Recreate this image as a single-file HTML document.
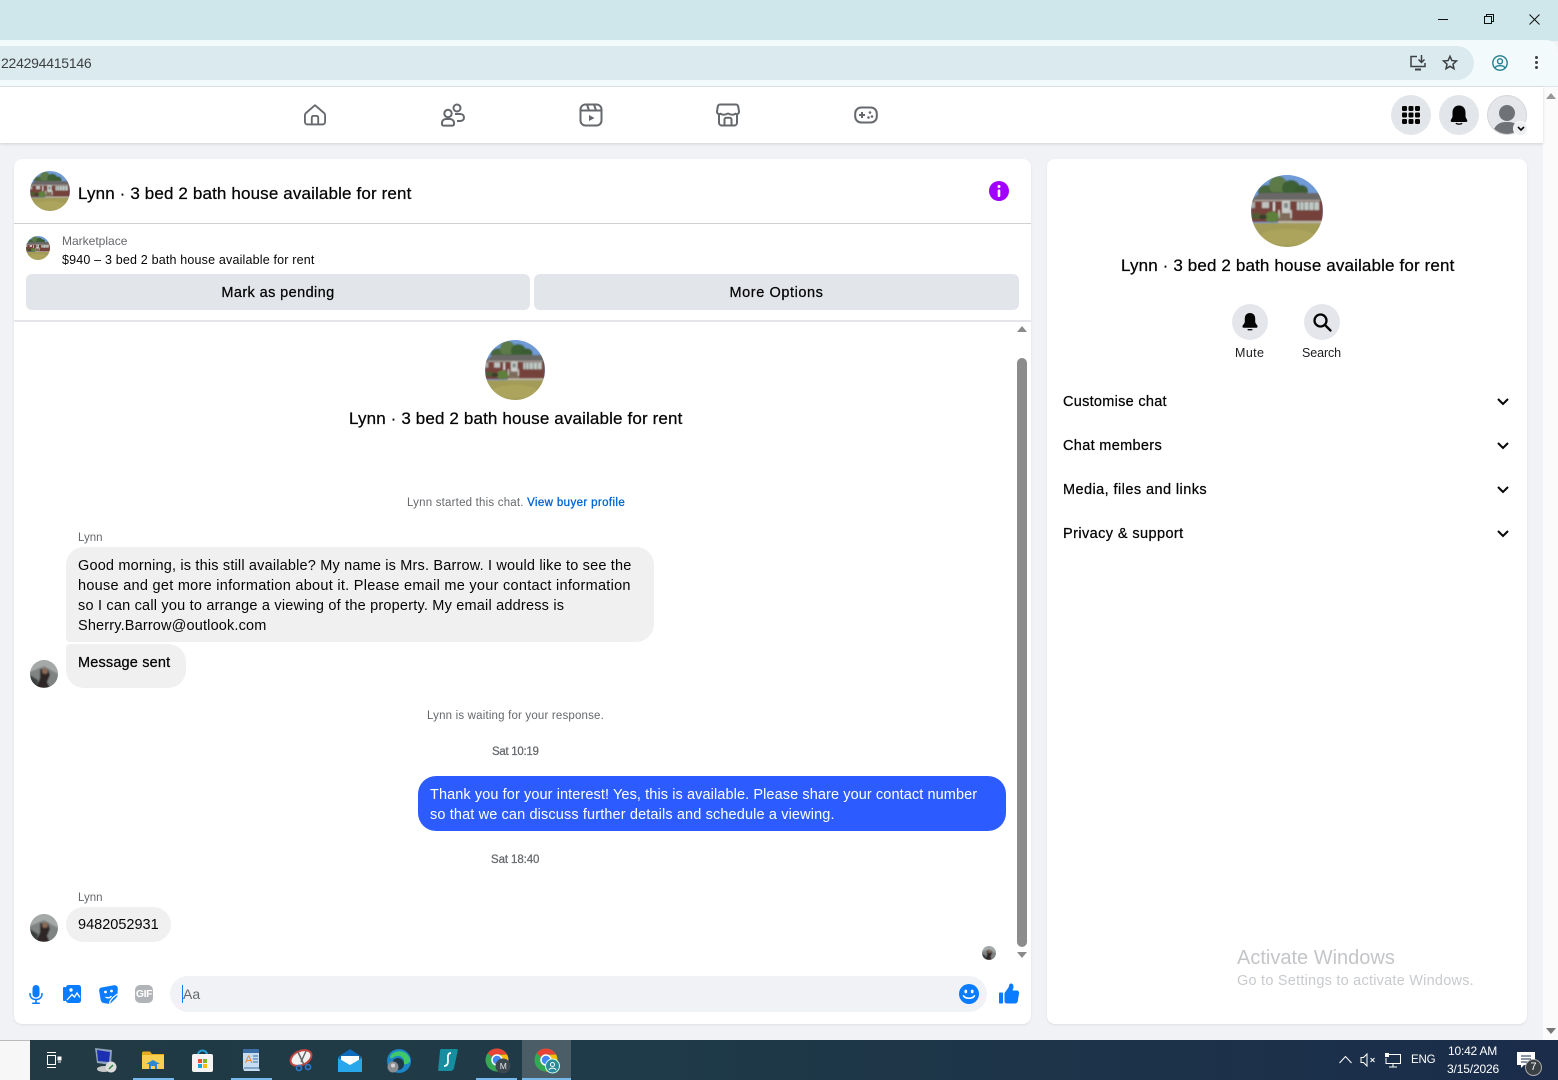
<!DOCTYPE html>
<html><head><meta charset="utf-8"><style>
*{box-sizing:border-box}
html,body{margin:0;padding:0;width:1558px;height:1080px;overflow:hidden;background:#f0f2f5;font-family:"Liberation Sans",sans-serif;color:#050505}
.a{position:absolute;white-space:nowrap}
.t{position:absolute;white-space:nowrap;line-height:20px}
svg{position:absolute;overflow:visible}
.b{position:absolute;border-radius:50%}
.btn{position:absolute;background:#e2e5e9;border-radius:6px;text-align:center;font-size:14.5px;line-height:38px;-webkit-text-stroke:.25px #050505}
.s{-webkit-text-stroke:.25px currentColor}
</style></head><body>
<svg width="0" height="0" style="position:absolute"><defs>
<filter id="bl" x="-5%" y="-5%" width="110%" height="110%"><feGaussianBlur stdDeviation="0.8"/></filter>
<symbol id="house" viewBox="0 0 72 72"><g filter="url(#bl)">
<rect x="-2" y="-2" width="76" height="76" fill="#6f9bd6"/>
<ellipse cx="16" cy="17" rx="9" ry="7" fill="#46663a"/>
<ellipse cx="27" cy="10" rx="9" ry="9" fill="#5d7a48"/>
<ellipse cx="40" cy="13" rx="9" ry="8" fill="#3e6034"/>
<ellipse cx="50" cy="16" rx="7" ry="6" fill="#3a5c32"/>
<rect x="8" y="17" width="46" height="6" fill="#43633a"/>
<rect x="0" y="24" width="72" height="23" fill="#74423a"/>
<path d="M0 25L9 18H68L72 24V26H0z" fill="#6a6866"/>
<rect x="3" y="25" width="66" height="1.200" fill="#b4b0a8"/>
<rect x="11" y="27" width="7" height="6" fill="#bfc2bf"/><rect x="0" y="27" width="4" height="6" fill="#a9aca8"/>
<rect x="22" y="27" width="2" height="9" fill="#ddd"/>
<rect x="31" y="26" width="8" height="12" fill="#c9cdc9"/><rect x="33" y="28" width="4" height="5" fill="#7e8a8a"/>
<rect x="46" y="27" width="22" height="8" fill="#c3c8c4"/><path d="M49 27v8M53 27v8M58 27v8M63 27v8" stroke="#5f7a72" stroke-width="1"/>
<rect x="28" y="38" width="13" height="9" fill="#7d6a58"/><path d="M28 35v8M40 35v8" stroke="#ddd" stroke-width="1.200"/>
<ellipse cx="21" cy="42" rx="7" ry="5.500" fill="#5f7f3c"/><ellipse cx="5" cy="41" rx="5" ry="3" fill="#4d5b30"/><ellipse cx="12" cy="42" rx="4" ry="2.500" fill="#38402a"/>
<rect x="27" y="46" width="47" height="2.200" fill="#bdb8ac"/>
<rect x="-2" y="48" width="76" height="26" fill="#a39c58"/>
<ellipse cx="36" cy="62" rx="28" ry="8" fill="#aca45c"/>
</g></symbol>
<symbol id="face" viewBox="0 0 28 28"><g filter="url(#bl)">
<rect x="-1" y="-1" width="30" height="30" fill="#7f8483"/><path d="M0 0H28V14L14 6 0 12z" fill="#a5aaa9"/>
<path d="M10 9h8l2 6-3 7 3 6H6l4-10z" fill="#2f2825"/><circle cx="15" cy="11" r="3" fill="#8a6a54"/><path d="M0 15L8 20 7 28H0z" fill="#3e4140"/>
</g></symbol>
</defs></svg>

<!-- Chrome -->
<div class="a" style="left:0;top:0;width:1558px;height:41px;background:#cfe6eb"></div>
<div class="a" style="left:0;top:40px;width:1558px;height:47px;background:#f3fafc;border-top-right-radius:12px;border-bottom:1px solid #dfe5e8"></div>
<div class="a" style="left:0;top:46px;width:1474px;height:34px;background:#dbeaef;border-radius:0 17px 17px 0"></div>
<div class="t" style="left:1px;top:53px;font-size:14px;letter-spacing:-.25px;color:#3c4043">224294415146</div>
<svg style="left:1438px;top:14px" width="11" height="11"><path d="M0 5.5H10" stroke="#111" stroke-width="1"/></svg>
<svg style="left:1484px;top:14px" width="11" height="11" fill="none" stroke="#111" stroke-width="1"><rect x=".5" y="2.5" width="7" height="7"/><path d="M2.5 2.5V.5H9.5V7.5H7.5"/></svg>
<svg style="left:1529px;top:14px" width="11" height="11"><path d="M.5.5L10.5 10.5M10.5.5L.5 10.5" stroke="#111" stroke-width="1"/></svg>
<svg style="left:1410px;top:55px" width="17" height="16" fill="none" stroke="#3c4043" stroke-width="1.500"><path d="M7 1.500H1V11.500H15V8"/><path d="M5 14.500H11" stroke-width="2"/><path d="M11.500 0V7M8.500 4.500L11.500 7.500 14.500 4.500"/></svg>
<svg style="left:1442px;top:55px" width="16" height="15" viewBox="0 0 16 15" fill="none" stroke="#3c4043" stroke-width="1.500"><path d="M8 1.300L9.900 5.600 14.500 6 11 9.100 12 13.700 8 11.300 4 13.700 5 9.100 1.500 6 6.100 5.600z"/></svg>
<svg style="left:1492px;top:55px" width="16" height="16" viewBox="0 0 16 16" fill="none" stroke="#25808f" stroke-width="1.400"><circle cx="8" cy="8" r="7.200"/><circle cx="8" cy="6.300" r="2.500"/><path d="M3 12.600C5 10 11 10 13 12.600"/></svg>
<div class="b" style="left:1535px;top:56px;width:3px;height:3px;background:#3c4043"></div>
<div class="b" style="left:1535px;top:61px;width:3px;height:3px;background:#3c4043"></div>
<div class="b" style="left:1535px;top:66px;width:3px;height:3px;background:#3c4043"></div>

<!-- Page scrollbar -->
<div class="a" style="left:1543px;top:87px;width:15px;height:953px;background:#fbfbfb"></div>
<svg style="left:1546px;top:93px" width="10" height="6"><path d="M0 6L5 0 10 6z" fill="#999"/></svg>
<svg style="left:1546px;top:1028px" width="10" height="6"><path d="M0 0L5 6 10 0z" fill="#777"/></svg>

<!-- FB top nav -->
<div class="a" style="left:0;top:87px;width:1543px;height:56px;background:#fff;box-shadow:0 1px 3px rgba(0,0,0,.14)"></div>
<svg style="left:304px;top:103px" width="22" height="23" viewBox="0 0 24 24" fill="none" stroke="#65686c" stroke-width="2" stroke-linejoin="round"><path d="M12 1.800L2 10.500C1.300 11.100 1 11.800 1 12.700V20C1 21.600 2.200 22.800 3.800 22.800H20.200C21.800 22.800 23 21.600 23 20V12.700C23 11.800 22.700 11.100 22 10.500z"/><path d="M8.500 22.800V15.500C8.500 14.300 9.300 13.500 10.500 13.500H13.500C14.700 13.500 15.500 14.300 15.500 15.500V22.800"/></svg>
<svg style="left:441px;top:103px" width="24" height="24" viewBox="0 0 24 24" fill="none" stroke="#65686c" stroke-width="2"><circle cx="7" cy="10.500" r="3.700"/><circle cx="16" cy="5" r="3.500"/><path d="M1 21V20C1 17.500 3 16 5 16H9C11 16 13 17.500 13 20V21C13 22 12.500 22.600 11.500 22.600H2.500C1.500 22.600 1 22 1 21Z"/><path d="M14 11H19C21.500 11 23 12.600 23 14.500S21.500 18 19 18H16"/></svg>
<svg style="left:579px;top:103px" width="24" height="24" viewBox="0 0 24 24" fill="none" stroke="#65686c" stroke-width="2"><rect x="1.500" y="1.500" width="21" height="21" rx="5"/><path d="M1.500 7.500H22.500M8 1.500L10 7.500M15 1.500L17 7.500"/><path d="M10 12V18L15.500 15z" fill="#65686c" stroke="none"/></svg>
<svg style="left:716px;top:103px" width="24" height="24" viewBox="0 0 24 24" fill="none" stroke="#65686c" stroke-width="2" stroke-linejoin="round"><path d="M4 1.500H20C21 1.500 22 2.500 22.300 4L23 8.500C23 11 21 11.500 19.500 10.700 18 11.900 15 11.900 12 10.500 9 11.900 6 11.900 4.500 10.700 3 11.500 1 11 1 8.500L1.700 4C2 2.500 3 1.500 4 1.500Z"/><path d="M3 11V19.500C3 21 4 22.500 5.500 22.500H18.500C20 22.500 21 21 21 19.500V11"/><path d="M8.500 22.500V16.500C8.500 15.500 9.300 14.700 10.300 14.700H13.700C14.700 14.700 15.500 15.500 15.500 16.500V22.500"/></svg>
<svg style="left:854px;top:103px" width="24" height="24" viewBox="0 0 24 24" fill="none" stroke="#65686c" stroke-width="2"><rect x="1.200" y="4.500" width="21.600" height="15" rx="6"/><path d="M5 12H11M8 9V15"/><circle cx="16" cy="9.500" r="1.300" fill="#65686c" stroke="none"/><circle cx="18" cy="13.500" r="1.300" fill="#65686c" stroke="none"/><circle cx="14.500" cy="14.500" r="1.300" fill="#65686c" stroke="none"/></svg>

<div class="b" style="left:1391px;top:95px;width:40px;height:40px;background:#e2e5e9"></div>
<svg style="left:1401px;top:105px" width="20" height="20" fill="#050505"><rect x="1" y="1" width="5" height="5" rx="1.200"/><rect x="7.500" y="1" width="5" height="5" rx="1.200"/><rect x="14" y="1" width="5" height="5" rx="1.200"/><rect x="1" y="7.500" width="5" height="5" rx="1.200"/><rect x="7.500" y="7.500" width="5" height="5" rx="1.200"/><rect x="14" y="7.500" width="5" height="5" rx="1.200"/><rect x="1" y="14" width="5" height="5" rx="1.200"/><rect x="7.500" y="14" width="5" height="5" rx="1.200"/><rect x="14" y="14" width="5" height="5" rx="1.200"/></svg>
<div class="b" style="left:1439px;top:95px;width:40px;height:40px;background:#e2e5e9"></div>
<svg style="left:1449px;top:105px" width="20" height="20" viewBox="0 0 20 20"><path d="M10 0.500C5.500 0.500 3.500 4 3.500 7.500V11.500C3.500 13 2 14 1.700 15.500 1.500 16.300 2 17 3 17H17C18 17 18.500 16.300 18.300 15.500 18 14 16.500 13 16.500 11.500V7.500C16.500 4 14.500 .5 10 .5Z" fill="#050505"/><path d="M7 18C7.500 19.500 12.500 19.500 13 18" fill="none" stroke="#050505" stroke-width="1.300"/></svg>
<div class="b" style="left:1487px;top:95px;width:40px;height:40px;background:#e4e6e9;border:1px solid #d5d7da;overflow:hidden">
<div class="b" style="left:11px;top:9px;width:16px;height:16px;background:#6f7276;border-radius:50%"></div>
<div class="b" style="left:5px;top:26px;width:28px;height:20px;background:#6f7276;border-radius:12px 12px 0 0"></div></div>
<div class="b" style="left:1513px;top:121px;width:15px;height:15px;background:#eceef0;border:1px solid #fff"></div>
<svg style="left:1516.500px;top:126px" width="8" height="6"><path d="M1 1L4 4 7 1" fill="none" stroke="#050505" stroke-width="1.600"/></svg>

<!-- Main chat panel -->
<div class="a" style="left:14px;top:159px;width:1017px;height:865px;background:#fff;border-radius:8px;box-shadow:0 1px 2px rgba(0,0,0,.08)"></div>
<svg style="left:30px;top:171px" width="40" height="40"><defs><clipPath id="c1"><circle cx="20" cy="20" r="20"/></clipPath></defs><g clip-path="url(#c1)"><use href="#house" width="40" height="40"/></g></svg>
<div class="t s" style="left:78px;top:184px;font-size:17px;letter-spacing:.14px">Lynn · 3 bed 2 bath house available for rent</div>
<svg style="left:988px;top:180px" width="22" height="22"><circle cx="11" cy="11" r="10" fill="#a200ff"/><circle cx="11" cy="6.500" r="1.500" fill="#fff"/><rect x="9.700" y="9.500" width="2.600" height="7.500" rx="1" fill="#fff"/></svg>
<div class="a" style="left:14px;top:223px;width:1017px;height:1px;background:#ced0d4"></div>
<svg style="left:26px;top:236px" width="24" height="24"><defs><clipPath id="c2"><circle cx="12" cy="12" r="12"/></clipPath></defs><g clip-path="url(#c2)"><use href="#house" width="24" height="24"/></g></svg>
<div class="t" style="left:62px;top:231px;font-size:12px;color:#65686c">Marketplace</div>
<div class="t" style="left:62px;top:250px;font-size:12.500px;letter-spacing:.18px">$940 – 3 bed 2 bath house available for rent</div>
<div class="btn" style="left:26px;top:274px;width:504px;height:36px;letter-spacing:.4px">Mark as pending</div>
<div class="btn" style="left:534px;top:274px;width:485px;height:36px;letter-spacing:.58px">More Options</div>
<div class="a" style="left:14px;top:320px;width:1017px;height:2px;background:#e4e6e9"></div>

<!-- Chat scrollbar -->
<svg style="left:1017px;top:326px" width="10" height="6"><path d="M0 6L5 0 10 6z" fill="#8a8a8a"/></svg>
<div class="a" style="left:1017px;top:358px;width:10px;height:589px;background:#8c8c8c;border-radius:5px"></div>
<svg style="left:1017px;top:952px" width="10" height="6"><path d="M0 0L5 6 10 0z" fill="#8a8a8a"/></svg>

<!-- Chat header block -->
<svg style="left:485px;top:340px" width="60" height="60"><defs><clipPath id="c3"><circle cx="30" cy="30" r="30"/></clipPath></defs><g clip-path="url(#c3)"><use href="#house" width="60" height="60"/></g></svg>
<div class="t s" style="left:349px;top:409px;font-size:17px;letter-spacing:.14px">Lynn · 3 bed 2 bath house available for rent</div>
<div class="t" style="left:407px;top:493px;font-size:11.500px;letter-spacing:.2px;color:#65686c">Lynn started this chat. <b style="color:#0064d1;font-weight:400;-webkit-text-stroke:.3px #0064d1;letter-spacing:.38px">View buyer profile</b></div>
<div class="t" style="left:78px;top:528px;font-size:11.500px;color:#65686c">Lynn</div>

<!-- Messages -->
<div class="a" style="left:66px;top:547px;width:588px;height:95px;background:#f0f0f0;border-radius:18px 18px 18px 4px"></div>
<div class="t" style="left:78px;top:556px;font-size:14.500px;letter-spacing:.176px">Good morning, is this still available? My name is Mrs. Barrow. I would like to see the</div>
<div class="t" style="left:78px;top:576px;font-size:14.500px;letter-spacing:.277px">house and get more information about it. Please email me your contact information</div>
<div class="t" style="left:78px;top:596px;font-size:14.500px;letter-spacing:.2px">so I can call you to arrange a viewing of the property. My email address is</div>
<div class="t" style="left:78px;top:616px;font-size:14.500px;letter-spacing:.16px">Sherry.Barrow@outlook.com</div>
<div class="a" style="left:66px;top:644px;width:120px;height:44px;background:#f0f0f0;border-radius:4px 18px 18px 18px"></div>
<div class="t s" style="left:78px;top:653px;font-size:14.500px;letter-spacing:.17px">Message sent</div>
<svg style="left:30px;top:660px" width="28" height="28"><defs><clipPath id="c4"><circle cx="14" cy="14" r="14"/></clipPath></defs><g clip-path="url(#c4)"><use href="#face" width="28" height="28"/></g></svg>

<div class="t" style="left:427px;top:706px;font-size:11.500px;letter-spacing:.18px;color:#65686c">Lynn is waiting for your response.</div>
<div class="t s" style="left:492px;top:742px;font-size:11.500px;letter-spacing:-.3px;color:#65686c">Sat 10:19</div>

<div class="a" style="left:418px;top:776px;width:588px;height:55px;background:#2c5cff;border-radius:18px"></div>
<div class="t" style="left:430px;top:785px;font-size:14.500px;letter-spacing:.094px;color:#fff">Thank you for your interest! Yes, this is available. Please share your contact number</div>
<div class="t" style="left:430px;top:805px;font-size:14.500px;letter-spacing:.13px;color:#fff">so that we can discuss further details and schedule a viewing.</div>

<div class="t s" style="left:491px;top:850px;font-size:11.500px;letter-spacing:-.1px;color:#65686c">Sat 18:40</div>
<div class="t" style="left:78px;top:888px;font-size:11.500px;color:#65686c">Lynn</div>
<div class="a" style="left:66px;top:907px;width:105px;height:35px;background:#f0f0f0;border-radius:18px"></div>
<div class="t" style="left:78px;top:915px;font-size:14.500px">9482052931</div>
<svg style="left:30px;top:914px" width="28" height="28"><defs><clipPath id="c5"><circle cx="14" cy="14" r="14"/></clipPath></defs><g clip-path="url(#c5)"><use href="#face" width="28" height="28"/></g></svg>
<svg style="left:982px;top:946px" width="14" height="14"><defs><clipPath id="c6"><circle cx="7" cy="7" r="7"/></clipPath></defs><g clip-path="url(#c6)"><use href="#face" width="14" height="14"/></g></svg>

<!-- Composer -->
<svg style="left:29px;top:985px" width="14" height="19" viewBox="0 0 14 19" fill="#0a7cff"><rect x="3.500" y="0" width="7" height="12.500" rx="3.500"/><path d="M1 8V9C1 12.500 3.500 14.500 7 14.500S13 12.500 13 9V8" fill="none" stroke="#0a7cff" stroke-width="1.500"/><rect x="6.200" y="14" width="1.600" height="4"/><rect x="3" y="17.500" width="8" height="1.500" rx=".7"/></svg>
<svg style="left:63px;top:985px" width="18" height="18" viewBox="0 0 18 18"><rect x="0" y="2" width="3" height="14" rx="1" fill="#0a7cff"/><rect x="3" y="0" width="15" height="18" rx="2.500" fill="#0a7cff"/><circle cx="8" cy="5" r="1.700" fill="#fff"/><path d="M4 15L9 9.500 11.500 12 14 8 17 12.500" fill="none" stroke="#fff" stroke-width="1.300"/></svg>
<svg style="left:99px;top:985px" width="19" height="19" viewBox="0 0 19 19"><path d="M2.500 2.500L15 .3C17 0 18.500 1 18.800 3L18.500 10C18.400 11 18 12 17 13L12 18C11 18.700 10 19 9 18.800L4.500 18C3 17.700 2 16.500 1.700 15L.2 6C0 4 1 2.800 2.500 2.500Z" fill="#0a7cff"/><circle cx="6.500" cy="7" r="1.400" fill="#fff"/><circle cx="12.500" cy="6" r="1.400" fill="#fff"/><path d="M6.500 12C8.500 13.500 11 13 12.500 11M10.500 18.500C11 15 13.500 12.500 18.500 9" fill="none" stroke="#fff" stroke-width="1.300"/></svg>
<div class="a" style="left:135px;top:985px;width:18px;height:18px;background:#b0b3b8;border-radius:5px;color:#fff;font-size:10.500px;font-weight:700;line-height:18px;text-align:center;letter-spacing:-.4px">GIF</div>
<div class="a" style="left:170px;top:976px;width:817px;height:36px;background:#f0f2f5;border-radius:18px"></div>
<div class="a" style="left:182px;top:985px;width:1px;height:18px;background:#0a7cff"></div>
<div class="t" style="left:183px;top:984px;font-size:14px;color:#65686c">Aa</div>
<svg style="left:959px;top:984px" width="20" height="20"><circle cx="10" cy="10" r="10" fill="#0a7cff"/><ellipse cx="6.800" cy="7.500" rx="1.400" ry="1.900" fill="#fff"/><ellipse cx="13.200" cy="7.500" rx="1.400" ry="1.900" fill="#fff"/><path d="M4.500 11.800C6.500 15 13.500 15 15.500 11.800" fill="none" stroke="#fff" stroke-width="1.500" stroke-linecap="round"/></svg>
<svg style="left:999px;top:983px" width="20" height="21" viewBox="0 0 20 21" fill="#0a7cff"><rect x="0" y="9.500" width="4" height="11" rx=".8"/><path d="M5.500 10L9.500 4.500C10 3.500 10 1.500 11 .8 12.500 0 14.500 1 14.500 3.500 14.500 5.500 13.500 7.500 13.500 7.500H18C19.500 7.500 20.200 9 20 10.500L18.800 18C18.500 19.500 17.500 20.500 16 20.500H8C6.500 20.500 5.500 19.500 5.500 18.500Z"/></svg>

<!-- Right panel -->
<div class="a" style="left:1047px;top:159px;width:480px;height:865px;background:#fff;border-radius:8px;box-shadow:0 1px 2px rgba(0,0,0,.08)"></div>
<svg style="left:1251px;top:175px" width="72" height="72"><defs><clipPath id="c7"><circle cx="36" cy="36" r="36"/></clipPath></defs><g clip-path="url(#c7)"><use href="#house" width="72" height="72"/></g></svg>
<div class="t s" style="left:1121px;top:256px;font-size:17px;letter-spacing:.14px">Lynn · 3 bed 2 bath house available for rent</div>
<div class="b" style="left:1232px;top:304px;width:36px;height:36px;background:#e4e6eb"></div>
<svg style="left:1242px;top:313px" width="16" height="18" viewBox="0 0 16 18" fill="#050505"><path d="M8 0C4.500 0 2.800 2.500 2.800 5.500V8.500C2.800 10.500 1 11.500 .5 13 .2 14 .8 14.800 1.800 14.800H14.200C15.200 14.800 15.800 14 15.500 13 15 11.500 13.200 10.500 13.200 8.500V5.500C13.200 2.500 11.500 0 8 0Z"/><rect x="5.500" y="16" width="5" height="1.400" rx=".7"/></svg>
<div class="t" style="left:1235px;top:343px;font-size:12.500px;letter-spacing:.4px;color:#1c1e21">Mute</div>
<div class="b" style="left:1304px;top:304px;width:36px;height:36px;background:#e4e6eb"></div>
<svg style="left:1313px;top:313px" width="18" height="18" fill="none" stroke="#050505" stroke-width="2.300"><circle cx="7.500" cy="7.500" r="6"/><path d="M12 12L17.500 17.500" stroke-linecap="round"/></svg>
<div class="t" style="left:1302px;top:343px;font-size:12.500px;letter-spacing:-.1px;color:#1c1e21">Search</div>

<div class="t s" style="left:1063px;top:392px;font-size:14.500px;letter-spacing:.28px">Customise chat</div>
<div class="t s" style="left:1063px;top:436px;font-size:14.500px;letter-spacing:.33px">Chat members</div>
<div class="t s" style="left:1063px;top:480px;font-size:14.500px;letter-spacing:.43px">Media, files and links</div>
<div class="t s" style="left:1063px;top:524px;font-size:14.500px;letter-spacing:.41px">Privacy &amp; support</div>
<svg style="left:1497px;top:398px" width="12" height="8"><path d="M1 1L6 6 11 1" fill="none" stroke="#050505" stroke-width="2"/></svg>
<svg style="left:1497px;top:442px" width="12" height="8"><path d="M1 1L6 6 11 1" fill="none" stroke="#050505" stroke-width="2"/></svg>
<svg style="left:1497px;top:486px" width="12" height="8"><path d="M1 1L6 6 11 1" fill="none" stroke="#050505" stroke-width="2"/></svg>
<svg style="left:1497px;top:530px" width="12" height="8"><path d="M1 1L6 6 11 1" fill="none" stroke="#050505" stroke-width="2"/></svg>

<div class="t" style="left:1237px;top:946px;font-size:20px;line-height:24px;color:#c3c5c8">Activate Windows</div>
<div class="t" style="left:1237px;top:971px;font-size:14.500px;letter-spacing:.23px;color:#c8cacd">Go to Settings to activate Windows.</div>

<!-- Taskbar -->
<div class="a" style="left:0;top:1040px;width:30px;height:40px;background:#f7f7f7;border-top:1px solid #bbb"></div>
<div class="a" style="left:30px;top:1040px;width:1528px;height:40px;background:linear-gradient(90deg,#213a44 0,#1f3a48 40%,#1a2c4a 100%)"></div>
<div class="a" style="left:522px;top:1040px;width:49px;height:40px;background:#4b5e68"></div>
<svg style="left:46px;top:1052px" width="16" height="16" fill="none" stroke="#fff" stroke-width="1"><path d="M1 .5H10M1 15.500H10"/><rect x="1.500" y="3.500" width="8" height="9"/><rect x="12" y="5" width="3" height="3" fill="#fff"/><path d="M12 10H15"/></svg>
<svg style="left:94px;top:1047px" width="24" height="26"><path d="M1 1L18 3 17 18 3 16z" fill="#8ea0b8"/><path d="M3 3L16 5 15 15 4 14z" fill="#1b2fb3"/><ellipse cx="10" cy="22" rx="7" ry="3" fill="#c8c8c8"/><circle cx="17" cy="20" r="5.500" fill="#dcdcdc"/><path d="M15 22L19 18" stroke="#2a8a3a" stroke-width="1.500"/></svg>
<svg style="left:142px;top:1051px" width="22" height="19"><path d="M0 2C0 1 .5 .5 1.500 .5H8L10 3H22V18H0z" fill="#e8a91f"/><rect x="0" y="4" width="22" height="14" fill="#f8cf52"/><path d="M7 18V13H4L11 9 18 13H15V18z" fill="#2b89d2"/><rect x="9" y="15" width="4" height="3" fill="#f8cf52"/></svg>
<div class="a" style="left:133px;top:1078px;width:41px;height:2px;background:#76b9ed"></div>
<svg style="left:192px;top:1049px" width="21" height="24"><path d="M6 6C6 0 15 0 15 6" fill="none" stroke="#1fa0d8" stroke-width="2"/><rect x="0" y="5" width="21" height="18" rx="2" fill="#f4f4f4"/><rect x="6" y="10" width="4" height="4" fill="#e8512a"/><rect x="11" y="10" width="4" height="4" fill="#7cb82a"/><rect x="6" y="15" width="4" height="4" fill="#1ba1e2"/><rect x="11" y="15" width="4" height="4" fill="#fdb813"/></svg>
<svg style="left:242px;top:1048px" width="19" height="24"><path d="M1 1H17V20L18 23H2L1 20z" fill="#c8dcf0"/><rect x="1" y="1" width="16" height="4" fill="#3b6ea5"/><text x="3" y="15" font-family="Liberation Sans" font-size="11" fill="#e8842a">A</text><path d="M11 8H16M11 11H16M11 14H16" stroke="#3b6ea5"/><path d="M2 20H17" stroke="#3b6ea5"/></svg>
<div class="a" style="left:231px;top:1078px;width:41px;height:2px;background:#76b9ed"></div>
<svg style="left:290px;top:1048px" width="24" height="24"><ellipse cx="11" cy="10" rx="11" ry="7" transform="rotate(-25 11 10)" fill="#f2f2f2" stroke="#c4453f" stroke-width="2"/><path d="M8 4L14 17M16 3L11 14" stroke="#666" stroke-width="1.500"/><circle cx="9" cy="20" r="2.500" fill="none" stroke="#2a76c8" stroke-width="1.800"/><circle cx="18" cy="19" r="2.500" fill="none" stroke="#2a76c8" stroke-width="1.800"/></svg>
<svg style="left:338px;top:1049px" width="24" height="23"><path d="M0 8L12 0 24 8V23H0z" fill="#0f6cbd"/><path d="M3 7H21V15L12 20 3 15z" fill="#fff"/><path d="M0 9L12 16 24 9V23H0z" fill="#28a8ea"/></svg>
<svg style="left:387px;top:1049px" width="24" height="24"><circle cx="12" cy="12" r="12" fill="#1b86c8"/><path d="M3 8C6 0 20 0 23 10 24 14 20 16 16 15 19 11 15 6 10 7 6 8 4 11 3 8Z" fill="#3fc96b"/><circle cx="11" cy="15" r="6" fill="#1e3a48"/><circle cx="6" cy="18" r="5.500" fill="#8b8f92"/><circle cx="6" cy="16.500" r="2" fill="#d5d5d5"/></svg>
<svg style="left:438px;top:1048px" width="20" height="24"><path d="M3 1H18C20 1 20 2 19.500 4L16 20C15.500 22 14 23 12 23H2C0 23 0 22 .3 20L2 3C2 2 2.500 1 3 1Z" fill="#178ea0"/><path d="M13 5C9 5 10 10 10 13S9 18 6 18" fill="none" stroke="#fff" stroke-width="1.700"/></svg>
<svg style="left:485px;top:1048px" width="26" height="26"><circle cx="12" cy="12" r="11.500" fill="#34a853"/><path d="M12 .5A11.500 11.500 0 0 1 22 6.500H12A5.500 5.500 0 0 0 6.500 9L2.800 5A11.500 11.500 0 0 1 12 .5Z" fill="#ea4335"/><path d="M22 6.500A11.500 11.500 0 0 1 12 23.500L17 12A5 5 0 0 0 15 7z" fill="#fbbc04"/><circle cx="12" cy="12" r="5" fill="#4285f4" stroke="#fff" stroke-width="1.500"/><circle cx="18" cy="18" r="7.500" fill="#3d4750"/><text x="14.800" y="21" font-family="Liberation Sans" font-size="8.500" fill="#e8e8e8">M</text></svg>
<div class="a" style="left:476px;top:1078px;width:41px;height:2px;background:#76b9ed"></div>
<svg style="left:534px;top:1048px" width="26" height="26"><circle cx="12" cy="12" r="11.500" fill="#34a853"/><path d="M12 .5A11.500 11.500 0 0 1 22 6.500H12A5.500 5.500 0 0 0 6.500 9L2.800 5A11.500 11.500 0 0 1 12 .5Z" fill="#ea4335"/><path d="M22 6.500A11.500 11.500 0 0 1 12 23.500L17 12A5 5 0 0 0 15 7z" fill="#fbbc04"/><circle cx="12" cy="12" r="5" fill="#4285f4" stroke="#fff" stroke-width="1.500"/><circle cx="18.500" cy="18" r="7" fill="#2d8a9a" stroke="#cfe" stroke-width="1"/><circle cx="18.500" cy="16.500" r="2" fill="none" stroke="#fff"/><path d="M15 22C16 19.500 21 19.500 22 22" fill="none" stroke="#fff"/></svg>
<div class="a" style="left:522px;top:1078px;width:49px;height:2px;background:#76b9ed"></div>

<svg style="left:1339px;top:1055px" width="13" height="9"><path d="M.5 8L6.500 1.500 12.500 8" fill="none" stroke="#fff" stroke-width="1"/></svg>
<svg style="left:1360px;top:1053px" width="16" height="14" fill="none" stroke="#fff" stroke-width="1"><path d="M1 4.500H3.500L7 1V13L3.500 9.500H1z"/><path d="M10.500 5L14.500 9M14.500 5L10.500 9"/></svg>
<svg style="left:1385px;top:1053px" width="16" height="15" fill="none" stroke="#fff" stroke-width="1"><path d="M4 1.500H15.500V10.500H1V5"/><rect x=".5" y=".5" width="3" height="3" fill="#fff"/><path d="M8 10.500V13.500M4 14H12"/></svg>
<div class="t" style="left:1411px;top:1050px;font-size:11.500px;letter-spacing:-.2px;color:#fff">ENG</div>
<div class="t" style="left:1448px;top:1041px;font-size:12px;letter-spacing:-.2px;color:#fff">10:42 AM</div>
<div class="t" style="left:1447px;top:1059px;font-size:12px;letter-spacing:-.15px;color:#fff">3/15/2026</div>
<svg style="left:1517px;top:1052px" width="18" height="16"><path d="M0 0H18V13H7L4 16V13H0z" fill="#fff"/><path d="M4 4H14M4 7H14M4 10H11" stroke="#1a2c4a"/></svg>
<div class="b" style="left:1525px;top:1059px;width:17px;height:17px;background:#3a3f44;border:1px solid #aaa;color:#fff;font-size:11px;line-height:15px;text-align:center">7</div>
</body></html>
